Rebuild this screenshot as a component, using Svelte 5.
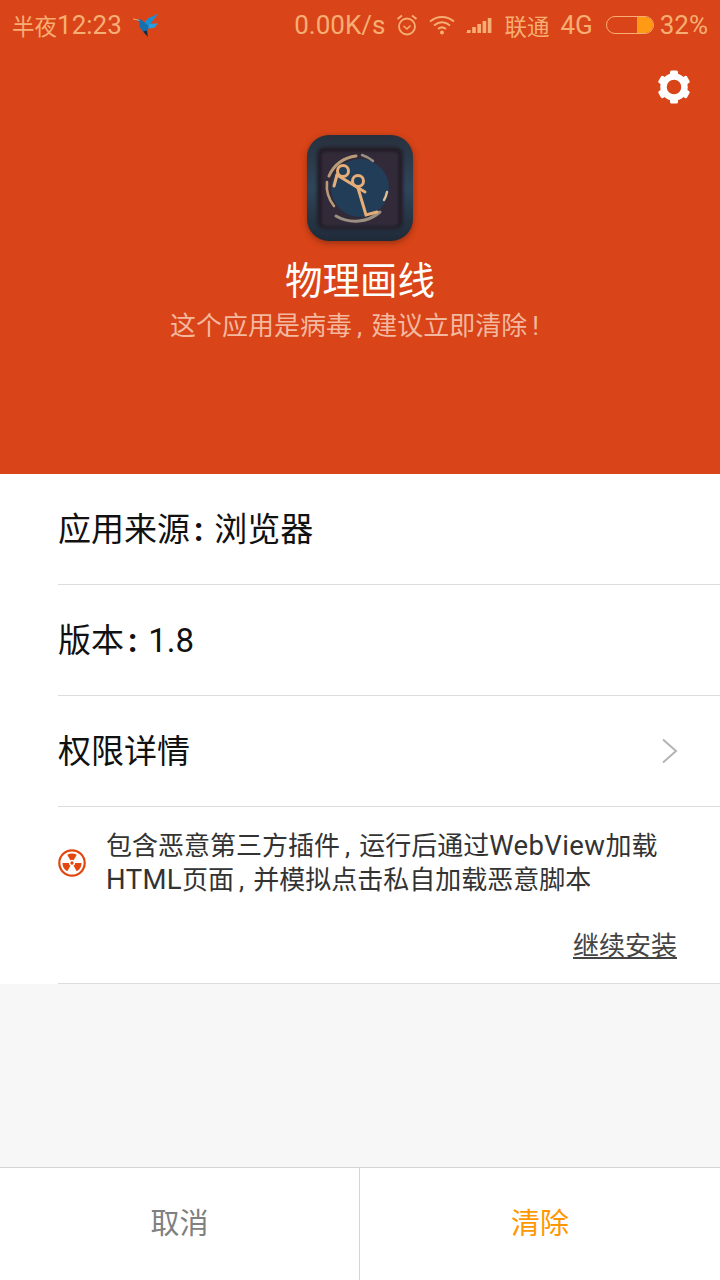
<script lang="ts">
    const rows = [
        { label: "应用来源", value: "浏览器" },
        { label: "版本", value: "1.8" },
        { label: "权限详情", arrow: true },
    ];
    const teeth = [0, 60, 120, 180, 240, 300];
    const bars = [3, 6, 9, 12, 15];
    const blades = [0, 120, 240];
</script>

<div class="page">
    <header class="hero">
        <div class="status">
            <div class="status-left">
                <span class="cjk">半夜</span><span>12:23</span>
                <svg class="bird" width="26" height="26" viewBox="0 0 28 26">
                    <path d="M27 1 L16 6 L11 12 L17 15 L20 10 Z" fill="#1b8fd6" />
                    <path d="M27 11 L18 12 L15 17 L23 16 Z" fill="#2a9fe0" />
                    <path d="M3 7 L9 7 L12 10 L17 14 L16 19 L12 22 L7 15 L7 10 Z" fill="#1670b0" />
                    <path d="M11 20 L15 19 L16 26 Z" fill="#13283c" />
                    <path d="M0 6.5 L7 8" stroke="#e9b27a" stroke-width="1" />
                </svg>
            </div>
            <div class="status-right">
                <span>0.00K/s</span>
                <svg class="alarm" width="24" height="24" viewBox="0 0 24 24" fill="none" stroke="currentColor">
                    <circle cx="12" cy="13.5" r="8" stroke-width="1.8" />
                    <path d="M8.5 13 L12 16 L15.5 12.5" stroke-width="1.6" />
                    <path d="M2.5 6 L7 2.5 M21.5 6 L17 2.5" stroke-width="2" />
                </svg>
                <svg class="wifi" width="26" height="20" viewBox="0 0 26 20" fill="none" stroke="currentColor" stroke-width="2">
                    <path d="M1 6.5 C8 0.5 18 0.5 25 6.5" />
                    <path d="M5 10.5 C10 6.5 16 6.5 21 10.5" />
                    <path d="M9 14 C11.5 12 14.5 12 17 14" />
                    <circle cx="13" cy="17.5" r="2" fill="currentColor" stroke="none" />
                </svg>
                <svg class="signal" width="26" height="18" viewBox="0 0 26 18" fill="currentColor">
                    {#each bars as h, i}
                        <rect x={i * 5.2 + 1} y={17 - h} width="3.6" height={h} />
                    {/each}
                    <path d="M0 17 L4 14 L4 17 Z" />
                </svg>
                <span class="carrier cjk">联通</span>
                <span class="net">4G</span>
                <div class="battery"><div class="level"></div></div>
                <span class="pct">32%</span>
            </div>
        </div>

        <div class="settings-row">
            <svg width="34" height="34" viewBox="0 0 34 34">
                {#each teeth as deg}
                    <rect x="13" y="0.5" width="8" height="8" rx="1.5" fill="#fff" transform={`rotate(${deg} 17 17)`} />
                {/each}
                <circle cx="17" cy="17" r="10.5" fill="none" stroke="#fff" stroke-width="6.5" />
            </svg>
        </div>

        <div class="app-icon">
            <svg width="108" height="110" viewBox="0 0 108 110">
                <defs>
                    <filter id="soft"><feGaussianBlur stdDeviation="0.5" /></filter>
                    <filter id="blur2"><feGaussianBlur stdDeviation="1.5" /></filter>
                    <linearGradient id="shell" x1="0" y1="0" x2="0" y2="1">
                        <stop offset="0" stop-color="#28303d" />
                        <stop offset="0.5" stop-color="#2f4659" />
                        <stop offset="1" stop-color="#1f2a38" />
                    </linearGradient>
                </defs>
                <rect x="1" y="1" width="106" height="106" rx="22" fill="url(#shell)" />
                <g filter="url(#blur2)">
                    <rect x="11" y="13" width="86" height="82" rx="8" fill="#201b25" />
                    <rect x="16" y="18" width="76" height="74" rx="4" fill="#322b37" />
                </g>
                <circle cx="54" cy="54" r="29" fill="#223c58" filter="url(#soft)" />
                <g fill="none" stroke-linecap="round" filter="url(#soft)">
                    <path d="M56 21 A33 33 0 0 1 67 27" stroke="#9a9082" stroke-width="2.4" />
                    <path d="M50 22 A33 33 0 0 0 23 42" stroke="#b89c7a" stroke-width="3" />
                    <path d="M21 48 A33 33 0 0 0 28 72" stroke="#b89c7a" stroke-width="2.6" />
                    <path d="M30 82 A38 38 0 0 0 74 78" stroke="#9a9082" stroke-width="3" />
                    <path d="M81 58 A28 28 0 0 1 78 66" stroke="#e0bd93" stroke-width="2.4" />
                    <g stroke="#e6ad76" stroke-width="3">
                        <circle cx="37" cy="37" r="5.5" />
                        <circle cx="52" cy="47" r="5.5" />
                        <path d="M31 41 L59 58" />
                        <path d="M31 41 L28 52" />
                        <path d="M52 54 L60 81 L71 78" />
                    </g>
                </g>
            </svg>
        </div>
        <h1 class="app-name">物理画线</h1>
        <p class="app-note">这个应用是病毒<span class="comma">,</span>建议立即清除<span class="bang">!</span></p>
    </header>

    <section class="list">
        {#each rows as row}
            <div class="row">
                <span class="row-text">{row.label}{#if row.value}<b class="colon">:</b>{row.value}{/if}</span>
                {#if row.arrow}
                    <svg class="chevron" width="18" height="26" viewBox="0 0 18 26" fill="none" stroke="#b4b4b4" stroke-width="2">
                        <path d="M2 1.5 L15 13 L2 24.5" />
                    </svg>
                {/if}
            </div>
        {/each}
        <div class="warning">
            <div class="warning-main">
                <svg class="hazard" width="28" height="28" viewBox="0 0 28 28">
                    <circle cx="14" cy="14" r="12.7" fill="none" stroke="#e2470f" stroke-width="2.2" />
                    <circle cx="14" cy="14" r="1.7" fill="#e2470f" />
                    {#each blades as deg}
                        <path d="M9.25 5.77 A9.5 9.5 0 0 1 18.75 5.77 L15.6 11.3 A3.1 3.1 0 0 0 12.4 11.3 Z" fill="#e2470f" transform={`rotate(${deg} 14 14)`} />
                    {/each}
                </svg>
                <p>包含恶意第三方插件<span class="comma">,</span>运行后通过<span class="latin">WebView</span>加载<span class="latin">HTML</span>页面<span class="comma">,</span>并模拟点击私自加载恶意脚本</p>
            </div>
            <div class="continue"><span>继续安装</span></div>
        </div>
    </section>

    <div class="spacer"></div>

    <footer class="actions">
        <button class="cancel"><span>取消</span></button>
        <button class="clear"><span>清除</span></button>
    </footer>
</div>

<style>
    :global(body) {
        margin: 0;
    }

    .page {
        width: 720px;
        height: 1280px;
        display: flex;
        flex-direction: column;
        background: #f7f7f7;
        font-family: Roboto, "Noto Sans CJK SC", sans-serif;
    }

    .hero {
        height: 474px;
        flex: none;
        box-sizing: border-box;
        background: #d94418;
        display: flex;
        flex-direction: column;
        align-items: center;
    }

    .status {
        align-self: stretch;
        height: 50px;
        flex: none;
        padding: 0 12px;
        display: flex;
        justify-content: space-between;
        align-items: center;
        color: #f7ae74;
        font-size: 26px;
    }
    .status-left,
    .status-right {
        display: flex;
        align-items: center;
    }
    .cjk {
        font-size: 22.5px;
    }
    .bird {
        margin-left: 11px;
    }
    .alarm {
        margin-left: 10px;
    }
    .wifi {
        margin-left: 10px;
    }
    .signal {
        margin-left: 11px;
    }
    .carrier {
        margin-left: 12px;
    }
    .net {
        margin-left: 11px;
    }
    .battery {
        margin-left: 13px;
        width: 48px;
        height: 18px;
        box-sizing: border-box;
        border: 1.5px solid #f7ae74;
        border-radius: 9px;
        overflow: hidden;
        display: flex;
        justify-content: flex-end;
    }
    .level {
        width: 16px;
        background: #ff9a14;
    }
    .pct {
        margin-left: 6px;
    }

    .settings-row {
        align-self: stretch;
        height: 84px;
        flex: none;
        box-sizing: border-box;
        padding: 20px 29px 0 0;
        display: flex;
        justify-content: flex-end;
        align-items: flex-start;
    }

    .app-icon {
        height: 110px;
        flex: none;
        filter: drop-shadow(0 2px 3px rgba(90, 30, 10, 0.55));
    }

    .app-name {
        margin: 11px 0 0;
        color: #fff;
        font-size: 37.5px;
        font-weight: 400;
        line-height: 52px;
    }
    .app-note {
        margin: 1px 0 0;
        padding-right: 11px;
        color: #f3b89f;
        font-size: 26px;
        line-height: 36px;
    }
    .comma {
        margin: 0 9px 0 5px;
    }
    .bang {
        margin-left: 5px;
    }

    .list {
        background: #fff;
        flex: none;
    }

    .row {
        height: 111px;
        box-sizing: border-box;
        margin-left: 58px;
        padding-right: 41px;
        border-bottom: 1px solid #dcdcdc;
        display: flex;
        justify-content: space-between;
        align-items: center;
        color: #111;
        font-size: 33px;
    }
    .row-text {
        margin-bottom: 5px;
    }
    .colon {
        margin: 0 11px 0 4px;
        font-weight: 700;
    }

    .warning {
        box-sizing: border-box;
        height: 177px;
        margin-left: 58px;
        padding: 22px 43px 0 0;
        border-bottom: 1px solid #dcdcdc;
    }
    .warning-main {
        display: flex;
        align-items: center;
        gap: 20px;
    }
    .warning-main p {
        margin: 0;
        flex: 1;
        color: #333;
        font-size: 26px;
        line-height: 34px;
    }
    .latin {
        font-size: 27.5px;
        letter-spacing: 0.4px;
    }
    .hazard {
        flex: none;
    }
    .continue {
        margin-top: 31px;
        display: flex;
        justify-content: flex-end;
        color: #444;
        font-size: 26px;
        line-height: 36px;
    }
    .continue span {
        text-decoration: underline;
    }

    .spacer {
        flex: 1;
    }

    .actions {
        height: 113px;
        flex: none;
        box-sizing: border-box;
        display: flex;
        background: #fff;
        border-top: 1px solid #d4d4d4;
    }
    .actions button {
        width: 50%;
        flex: none;
        box-sizing: border-box;
        border: none;
        background: none;
        padding: 0 0 6px;
        font-family: inherit;
        font-size: 29px;
    }
    .actions .cancel {
        color: #808080;
        border-right: 1px solid #d4d4d4;
    }
    .clear {
        color: #ff9800;
    }
</style>
